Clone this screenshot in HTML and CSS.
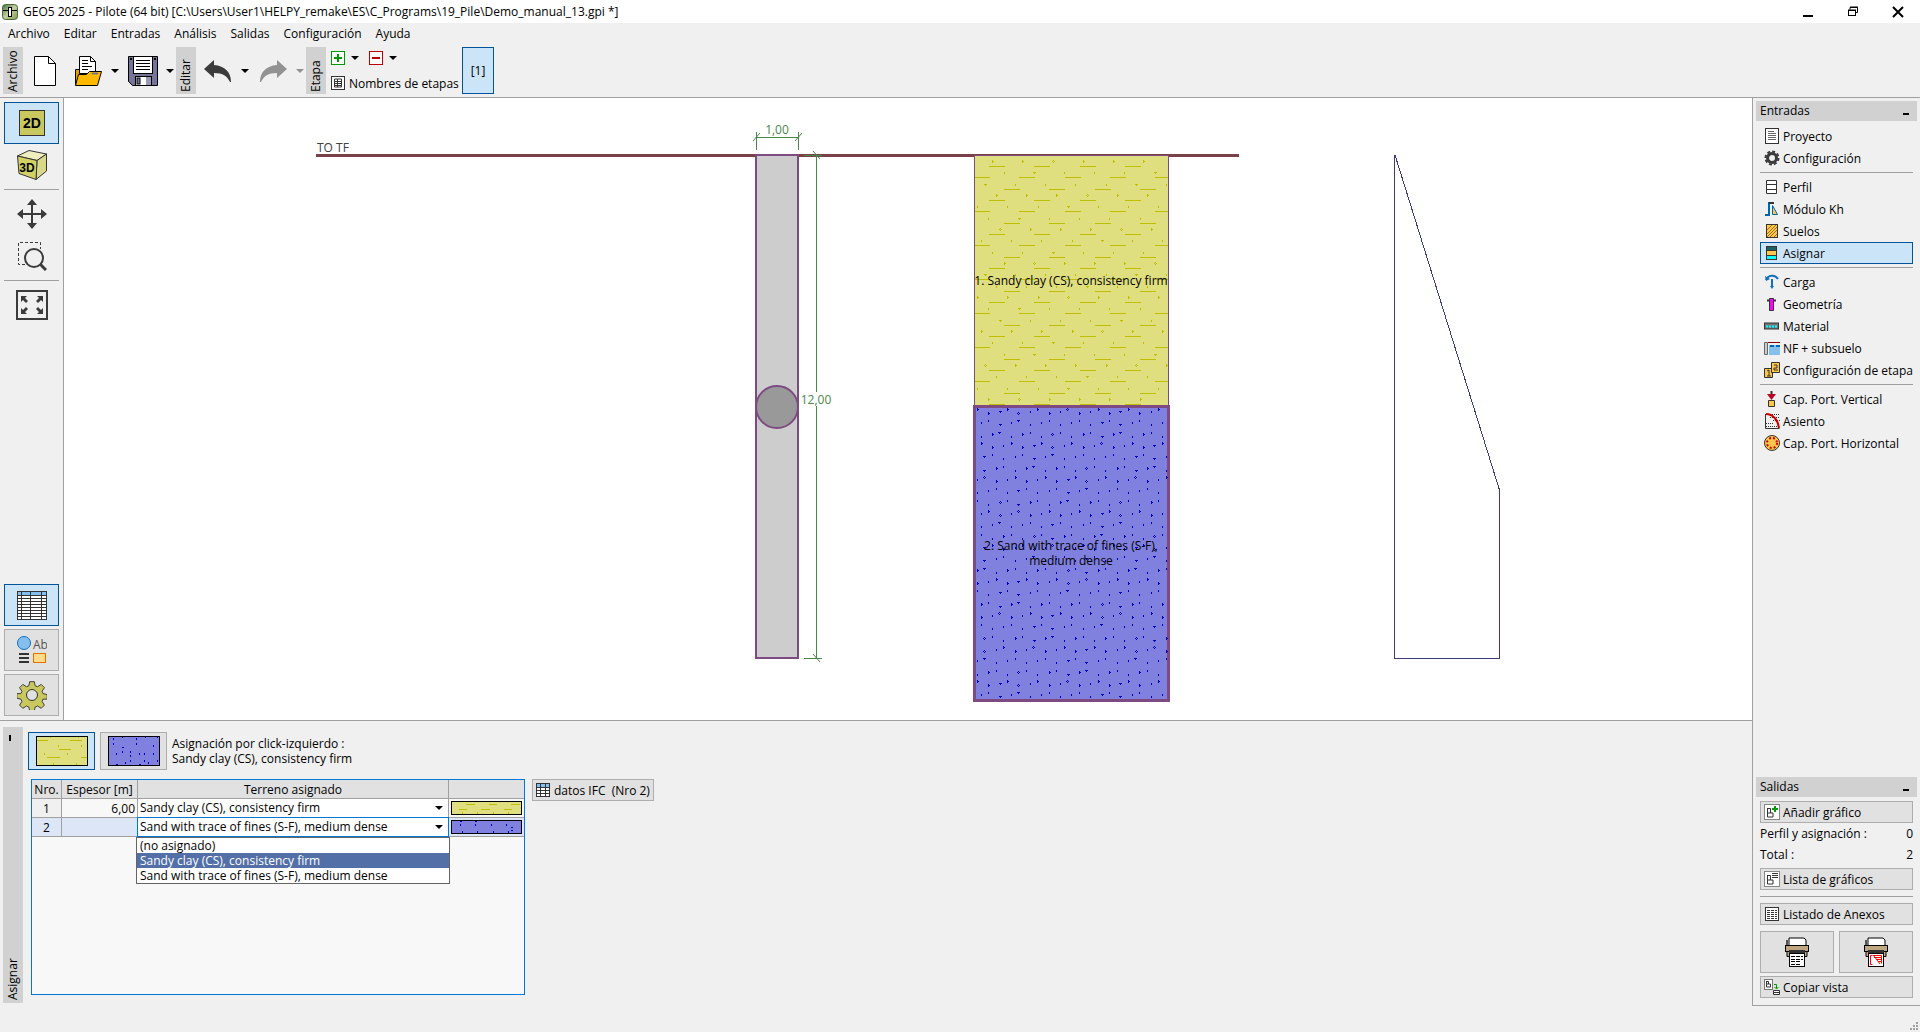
FILE: index.html
```html
<!DOCTYPE html>
<html lang="es">
<head>
<meta charset="utf-8">
<meta name="viewport" content="width=device-width, initial-scale=1">
<title>GEO5 2025 - Pilote</title>
<link rel="stylesheet" href="styles.css">
</head>
<body>
<header class="titlebar">
  <svg class="app-icon" width="16" height="16" viewBox="0 0 16 16"><defs><linearGradient id="app" x1="0" y1="0" x2="1" y2="1"><stop offset="0" stop-color="#3f7040"/><stop offset=".5" stop-color="#c3cf9c"/><stop offset="1" stop-color="#7f9a50"/></linearGradient></defs><rect x=".5" y=".5" width="15" height="15" rx="3" fill="url(#app)" stroke="#4c6a3e"/><path d="M1 6.500h5M10 6.500h5" stroke="#000"/><rect x="6.500" y="3.500" width="3" height="9" fill="#fff" stroke="#000"/></svg>
  <h1 class="title">GEO5 2025 - Pilote (64 bit) [C:\Users\User1\HELPY_remake\ES\C_Programs\19_Pile\Demo_manual_13.gpi *]</h1>
  <div class="window-buttons">
    <button class="win" aria-label="Minimizar"><svg width="12" height="12"><path d="M1 9h10v2H1z"/></svg></button>
    <button class="win" aria-label="Restaurar"><svg width="12" height="12" fill="none" stroke="#000"><path d="M3 3.500V1.500h7.500v5H9M3 1h8M1 4h8" /><rect x="1.500" y="4.500" width="7" height="5"/></svg></button>
    <button class="win" aria-label="Cerrar"><svg width="12" height="12"><path d="M1 1l10 10M11 1L1 11" stroke="#000" stroke-width="2"/></svg></button>
  </div>
</header>
<nav class="menubar">
  <button>Archivo</button><button>Editar</button><button>Entradas</button><button>Análisis</button><button>Salidas</button><button>Configuración</button><button>Ayuda</button>
</nav>
<div class="toolbar">
  <section class="tool-group">
    <span class="handle">Archivo</span>
    <button class="tool" aria-label="Nuevo"><svg width="30" height="32" viewBox="0 0 30 32"><path d="M4.500 1.500h14l7 7v22h-21z" fill="#fff" stroke="#000"/><path d="M18.500 1.500v7h7" fill="none" stroke="#000"/></svg></button>
    <button class="tool" aria-label="Abrir"><svg width="30" height="32" viewBox="0 0 30 32"><path d="M2.500 14.500h8v15H2.500z" fill="#e69b00" stroke="#000"/><path d="M6.500 1.500h11l5 5v12h-16z" fill="#fff" stroke="#000"/><path d="M17.500 1.500v5h5M9 5.500h6M9 8.500h6M9 11.500h10M9 14.500h6" fill="none" stroke="#000"/><path d="M5.500 19.500h8l3-3h12l-4 14h-22z" fill="#ffba00" stroke="#000"/><path d="M19 19h6v-1h-6z" fill="#777" stroke="#777"/></svg></button>
    <button class="drop" aria-label="Abrir reciente"><i class="caret"></i></button>
    <button class="tool" aria-label="Guardar"><svg width="30" height="32" viewBox="0 0 30 32"><path d="M.5 1.500h29v29H4.500l-4-4z" fill="#77749a" stroke="#000"/><rect x="5.500" y="1.500" width="19" height="17" fill="#fff" stroke="#000"/><path d="M8 5.500h14M8 8.500h14M8 11.500h14M8 14.500h14" stroke="#000"/><path d="M2 3h2v2H2zM26 3h2v2h-2z"/><rect x="7.500" y="21.500" width="16" height="9" fill="#fff" stroke="#000"/><rect x="9" y="23" width="3" height="6" fill="#77749a" stroke="#000"/><path d="M18 22h5v8h-5z" fill="#9a98b5"/></svg></button>
    <button class="drop" aria-label="Guardar como"><i class="caret"></i></button>
  </section>
  <section class="tool-group">
    <span class="handle">Editar</span>
    <button class="tool" aria-label="Deshacer"><svg width="30" height="32" viewBox="0 0 30 32"><path d="M1 14L11 5v5c11 1 17 7 17 17h-1c-3-6-7-9-16-9v5z" fill="#3b3b3b"/></svg></button>
    <button class="drop" aria-label="Historial"><i class="caret"></i></button>
    <button class="tool" aria-label="Rehacer" disabled><svg width="30" height="32" viewBox="0 0 30 32"><path d="M29 14L19 5v5C8 11 2 17 2 27h1c3-6 7-9 16-9v5z" fill="#929292"/></svg></button>
    <button class="drop" aria-label="Historial de rehacer" disabled><i class="caret caret-off"></i></button>
  </section>
  <section class="tool-group">
    <span class="handle">Etapa</span>
    <div class="stage">
      <div class="stage-row">
        <button aria-label="Añadir etapa"><svg width="14" height="14"><rect x=".5" y=".5" width="13" height="13" fill="#fff" stroke="#090"/><path d="M3 7h8M7 3v8" stroke="#090" stroke-width="2"/></svg></button>
        <button class="drop" aria-label="Opciones de añadir"><i class="caret"></i></button>
        <button class="minus" aria-label="Eliminar etapa"><svg width="14" height="14"><rect x=".5" y=".5" width="13" height="13" fill="#fff" stroke="#c00000"/><path d="M3 7h8" stroke="#c00000" stroke-width="2"/></svg></button>
        <button class="drop" aria-label="Opciones de eliminar"><i class="caret"></i></button>
      </div>
      <button class="stage-names"><svg width="14" height="14"><g fill="#fff" stroke="#333"><rect x=".5" y=".5" width="13" height="13"/><path d="M3.500 3h7v8h-7zM3 5.500h8M3 7.500h8M3 9.500h8M6.500 3v8"/></g></svg>Nombres de etapas</button>
    </div>
  </section>
  <button class="stage-tab selected">[1]</button>
</div>

<main class="main">
  <div class="left">
    <div class="work">
      <nav class="rail">
        <div class="rail-top">
          <button class="big selected" aria-label="Vista 2D"><svg width="30" height="30"><rect x="2.500" y="2.500" width="25" height="25" fill="#c8c85f" stroke="#333"/><text class="icon-bold" x="15" y="20" text-anchor="middle">2D</text></svg></button>
          <button class="big flat" aria-label="Vista 3D"><svg width="30" height="30" stroke="#333" stroke-linejoin="round"><path d="M.5 6L12 .5 29.500 4 20 10.500z" fill="#eeeec0"/><path d="M20 10.500L29.500 4v17L19 29.500z" fill="#d9d98a"/><path d="M.5 6L20 10.500l-1 19L2 23.500z" fill="#d2d264"/><text class="icon-bold small" x="10" y="22" text-anchor="middle" stroke="none">3D</text></svg></button>
          <hr>
          <button class="big flat" aria-label="Mover"><svg width="30" height="30"><path d="M15 0l5 6h-4v8h8v-4l6 5-6 5v-4h-8v8h4l-5 6-5-6h4v-8H6v4l-6-5 6-5v4h8V6h-4z" fill="#3b3b3b"/></svg></button>
          <button class="big flat" aria-label="Ampliar zona"><svg width="30" height="30" fill="none" stroke="#3b3b3b"><path d="M8 23.500H1.500v-22h22V8" stroke-dasharray="3 2"/><circle cx="17" cy="17" r="9" stroke-width="2"/><path d="M23 23l6 6" stroke-width="3"/></svg></button>
          <hr>
          <button class="big flat" aria-label="Ajustar a la ventana"><svg width="32" height="30"><rect x="1" y="1" width="30" height="28" fill="none" stroke="#3b3b3b" stroke-width="2"/><path d="M5 6h6l-2 2 3 3-2 2-3-3-2 2zM27 6h-6l2 2-3 3 2 2 3-3 2 2zM5 24h6l-2-2 3-3-2-2-3 3-2-2zM27 24h-6l2-2-3-3 2-2 3 3 2-2z" fill="#3b3b3b"/></svg></button>
        </div>
        <div class="rail-bottom">
          <button class="big selected" aria-label="Tabla"><svg width="30" height="30" shape-rendering="crispEdges"><rect x="0" y="1" width="30" height="28" fill="#fff"/><rect x="0" y="1" width="30" height="4" fill="#84bfee"/><path d="M0 1.500h30M0 5.500h30M0 8.500h30M0 11.500h30M0 14.500h30M0 17.500h30M0 20.500h30M0 23.500h30M0 26.500h30M0 29.500h30M.5 1v29M4.500 1v29M13.500 1v29M24.500 1v29M29.500 1v29" stroke="#333"/></svg></button>
          <button class="big" aria-label="Ajustes de dibujo"><svg width="30" height="30"><circle cx="7" cy="8" r="6.500" fill="#84bfee" stroke="#1070c0"/><text class="icon-ab" x="16" y="14">Ab</text><path d="M2 19h10M2 23h10M2 27h10" stroke="#333" stroke-width="2"/><rect x="16.500" y="18.500" width="12" height="9" fill="#ffdc8a" stroke="#e07000"/></svg></button>
          <button class="big" aria-label="Opciones"><svg width="30" height="30" viewBox="-15 -15 30 30"><path d="M-2.500 -14.500h5l1 4.500 2.500 1 4-2.500 3.500 3.500-2.500 4 1 2.500 4.500 1v5l-4.500 0-1 2.500 2.500 4-3.500 3.500-4-2.500-2.500 1-1 4.500h-5l-1-4.500-2.500-1-4 2.500-3.500-3.500 2.500-4-1-2.500-4.500-1v-5l4.500 0 1-2.500-2.500-4 3.500-3.500 4 2.500 2.500-1z" transform="scale(.92)" fill="#c8c85f" stroke="#333"/><circle r="5.500" fill="#e1e1e1" stroke="#333"/></svg></button>
        </div>
      </nav>
      <div class="canvas">
        <svg class="drawing" viewBox="0 0 1688 622" role="img" aria-label="Pilote y perfil del terreno">
          <g shape-rendering="crispEdges">
            <rect x="252" y="56" width="923" height="3" fill="#7a4248"/>
            <rect x="692" y="57" width="42" height="503" fill="#cdcdcd" stroke="#7d4b82" stroke-width="2"/>
            <rect x="910.500" y="57.500" width="194" height="251" fill="#dfdf80" stroke="#7d4b82"/>
            <g id="clay-hatch" fill="#bfbf00"></g>
            <rect x="910.500" y="308.500" width="194" height="294" fill="#8080df" stroke="#7d4b82" stroke-width="3"/>
            <g id="sand-hatch" fill="#0000bf"></g>
            <g fill="none" stroke="#4a854a">
              <path d="M692.500 34v18M734.500 34v18M692 39.500h42M752.500 57v237M752.500 308v252M740 57.500h18M740 560.500h18"/>
            </g>
            <path d="M1330.500 57v503.500h105V392L1331 57" fill="none" stroke="#3c3c78"/>
          </g>
          <circle cx="713" cy="309" r="21" fill="#999" stroke="#7d4b82" stroke-width="2"/>
          <path d="M689 43l7-8M731 43l7-8M749 53l7 8M749 556l7 8" stroke="#4a854a"/>
          <g class="draw-text">
            <text x="253" y="54" fill="#404040">TO TF</text>
            <text x="713" y="36" text-anchor="middle" fill="#4a854a">1,00</text>
            <text x="752" y="306" text-anchor="middle" fill="#4a854a">12,00</text>
            <text x="1007" y="187" text-anchor="middle">1. Sandy clay (CS), consistency firm</text>
            <text x="1007" y="452" text-anchor="middle">2. Sand with trace of fines (S-F),</text>
            <text x="1007" y="467" text-anchor="middle">medium dense</text>
          </g>
        </svg>
      </div>
    </div>

    <section class="frame">
      <div class="frame-handle"><i class="fold"></i><span>Asignar</span></div>
      <div class="frame-body">
        <div class="assign">
          <button class="soil-pick selected" aria-label="Sandy clay (CS), consistency firm"><svg width="52" height="30" shape-rendering="crispEdges"><rect x=".5" y=".5" width="51" height="29" fill="#dfdf80" stroke="#000"/><path d="M1 4h11v1H1zM34 4h12v1H34zM23 13h12v1H23zM11 21h13v1H11zM45 21h6v1h-6zM14 1h1v1h-1zM42 1h1v1h-1zM22 9h1v2h-1zM45 9h1v2h-1zM8 17h1v2H8zM31 17h1v2h-1zM17 27h1v2h-1zM40 27h1v2h-1z" fill="#bfbf00"/></svg></button>
          <button class="soil-pick" aria-label="Sand with trace of fines (S-F), medium dense"><svg width="52" height="30" shape-rendering="crispEdges"><rect x=".5" y=".5" width="51" height="29" fill="#8080df" stroke="#000"/><path d="M5 2h1v2H5zM5 7h1v2H5zM14 1h1v1h-1zM14 11h2v1h-2zM14 15h1v2h-1zM8 17h1v2H8zM8 28h2v1H8zM17 26h1v2h-1zM22 15h1v2h-1zM22 19h1v2h-1zM22 24h1v2h-1zM28 2h1v2h-1zM28 7h1v2h-1zM37 1h1v1h-1zM31 17h1v2h-1zM31 28h2v1h-2zM36 17h1v2h-1zM36 24h1v2h-1zM40 26h1v2h-1zM45 9h1v2h-1zM45 17h1v2h-1zM49 1h1v1h-1zM49 24h1v2h-1z" fill="#0000bf"/></svg></button>
          <p>Asignación por click-izquierdo :<br>Sandy clay (CS), consistency firm</p>
        </div>
        <div class="data">
          <div class="grid">
            <table>
              <colgroup><col class="c-num"><col class="c-thick"><col class="c-soil"><col></colgroup>
              <thead><tr><th>Nro.</th><th>Espesor [m]</th><th>Terreno asignado</th><th></th></tr></thead>
              <tbody>
                <tr><td class="num">1</td><td class="thick">6,00</td>
                  <td class="soil"><div class="combo"><select aria-label="Terreno asignado 1"><option>Sandy clay (CS), consistency firm</option><option>Sand with trace of fines (S-F), medium dense</option></select><i class="caret"></i></div></td>
                  <td class="swatch"><svg width="71" height="14" shape-rendering="crispEdges"><rect x=".5" y=".5" width="70" height="13" fill="#dfdf80" stroke="#000"/><path d="M15 3h9v1h-9zM38 3h8v1h-8zM60 3h9v1h-9zM8 8h8v1H8zM30 8h9v1h-9zM53 8h8v1h-8zM11 11h1v2h-1zM26 11h1v2h-1zM42 11h1v2h-1zM57 11h1v2h-1z" fill="#bfbf00"/></svg></td></tr>
                <tr class="current"><td class="num">2</td><td class="thick"></td>
                  <td class="soil"><div class="combo"><select aria-label="Terreno asignado 2"><option>Sand with trace of fines (S-F), medium dense</option><option>Sandy clay (CS), consistency firm</option></select><i class="caret"></i>
                    <ul class="options" role="listbox"><li role="option">(no asignado)</li><li role="option" class="on" aria-selected="true">Sandy clay (CS), consistency firm</li><li role="option">Sand with trace of fines (S-F), medium dense</li></ul></div></td>
                  <td class="swatch"><svg width="71" height="14" shape-rendering="crispEdges"><rect x=".5" y=".5" width="70" height="13" fill="#8080df" stroke="#000"/><path d="M9 1h2v1H9zM24 1h2v1h-2zM9 4h1v2H9zM24 4h1v2h-1zM40 4h1v2h-1zM55 4h1v2h-1zM11 11h1v2h-1zM26 11h1v2h-1zM42 11h1v2h-1zM57 11h1v2h-1zM60 7h2v1h-2zM60 10h2v1h-2z" fill="#0000bf"/></svg></td></tr>
              </tbody>
            </table>
          </div>
          <button class="btn ifc"><svg width="14" height="14" shape-rendering="crispEdges"><path d="M0 0h14v14H0z" fill="#fff"/><path d="M0 0h14v4H0z" fill="#84bfee"/><path d="M0 .5h14M0 4.500h14M0 7.500h14M0 10.500h14M0 13.500h14M.5 0v14M4.500 0v14M9.500 0v14M13.500 0v14" stroke="#333"/></svg><span>datos IFC&nbsp; (Nro 2)</span></button>
        </div>
      </div>
    </section>
  </div>

  <aside class="side">
    <section>
      <h2 class="side-head">Entradas<i class="fold-h"></i></h2>
      <nav class="entries">
        <button><svg width="16" height="16"><rect x="1.500" y=".5" width="13" height="15" fill="#fff" stroke="#333"/><path d="M4 3.500h6M4 5.500h8M4 7.500h8M4 9.500h8M4 11.500h8" stroke="#666"/></svg>Proyecto</button>
        <button><svg width="16" height="16" fill="none" stroke="#3b3b3b"><circle cx="8" cy="8" r="4.500" stroke-width="3"/><circle cx="8" cy="8" r="6.500" stroke-width="2" stroke-dasharray="3 2"/></svg>Configuración</button>
        <hr>
        <button><svg width="16" height="16"><path d="M2.500 1.500h10v13h-10zM2 5.500h11M2 10.500h11" fill="#fff" stroke="#333"/></svg>Perfil</button>
        <button><svg width="16" height="16"><path d="M1 14h4V2h5" fill="none" stroke="#0064b4" stroke-width="2"/><path d="M5 2h5" stroke="#333" stroke-width="2"/><path d="M8.500 4.500v9h5z" fill="#ffc84a" stroke="#0064b4"/></svg>Módulo Kh</button>
        <button><svg width="16" height="16"><rect x="2.500" y="1.500" width="11" height="13" fill="#ffc84a" stroke="#333"/><path d="M3 7l5-5M3 11l9-9M3 14L13 4M6 14l7-7M10 14l3-3" stroke="#a06a10"/></svg>Suelos</button>
        <button class="selected"><svg width="16" height="16"><rect x="2.500" y="1.500" width="10" height="13" fill="#ffc84a" stroke="#333"/><path d="M3 2h9v3H3z" fill="#1f5f5f"/><path d="M3 11h9v3H3z" fill="#0ff"/><path d="M2 5.500h11M2 10.500h11" stroke="#333"/></svg>Asignar</button>
        <hr>
        <button><svg width="16" height="16" fill="none" stroke="#1070c0" stroke-width="2"><path d="M2 6c2-5 9-6 12-1M8 5v8"/><path d="M1 2l1 5 4-2zM6 12h4l-2 3z" stroke="none" fill="#1070c0"/></svg>Carga</button>
        <button><svg width="16" height="16"><path d="M3 4.500h9" stroke="#333" stroke-width="2"/><path d="M5.500 2.500h4v12h-4z" fill="#f0f" stroke="#333"/></svg>Geometría</button>
        <button><svg width="16" height="16"><rect x=".5" y="5" width="14" height="6" fill="#777" stroke="#333"/><path d="M2 8.500h11" stroke="#0ff" stroke-width="2" stroke-dasharray="2 1"/></svg>Material</button>
        <button><svg width="16" height="16"><path d="M5 5h11v10H5z" fill="#84bfee"/><path d="M.5 2.500h3v12h-3z" fill="#ccc" stroke="#666"/><path d="M4 2.500h12" stroke="#800000"/><path d="M6 6h4M12 6h4" stroke="#0064b4" stroke-width="2"/></svg>NF + subsuelo</button>
        <button><svg width="16" height="16"><path d="M.5 6.500h8v9h-8z" fill="#ffc84a" stroke="#333"/><path d="M7.500.5h8v10h-8z" fill="#ffc84a" stroke="#333"/><path d="M3 9l2-1v6M3 14h4M10 3h3v3h-3v2h4" fill="none" stroke="#333"/></svg>Configuración de etapa</button>
        <hr>
        <button><svg width="16" height="16"><path d="M4.500 9.500h6v6h-6z" fill="#ffc84a" stroke="#333"/><path d="M7.500 0v6" stroke="#333" stroke-width="2"/><path d="M3 3h9L7.500 9z" fill="#c00020"/></svg>Cap. Port. Vertical</button>
        <button><svg width="16" height="16"><path d="M4 1.500h12M6 4.500h10M9 7.500h7M2 10.500h8M2 13.500h14" stroke="#333" stroke-dasharray="1 1"/><path d="M1.500 1v14.500h14" fill="none" stroke="#333"/><path d="M2 1c7 0 12 6 13 14" fill="none" stroke="#c00" stroke-width="2"/></svg>Asiento</button>
        <button><svg width="16" height="16"><circle cx="8" cy="8" r="7.500" fill="#ffc84a" stroke="#333"/><circle cx="8" cy="8" r="5" fill="none" stroke="#c00" stroke-width="2" stroke-dasharray="2 2"/></svg>Cap. Port. Horizontal</button>
      </nav>
    </section>
    <section>
      <h2 class="side-head">Salidas<i class="fold-h"></i></h2>
      <div class="outputs">
        <button class="btn"><svg width="16" height="16"><rect x=".5" y=".5" width="15" height="15" fill="#fff" stroke="#888"/><path d="M3.500 4v9h5.500v-4H4M3.500 4.500h3V9" fill="none" stroke="#333"/><path d="M8 5h6M11 2v6" stroke="#090" stroke-width="2"/></svg>Añadir gráfico</button>
        <p class="count"><span>Perfil y asignación :</span><span>0</span></p>
        <p class="count"><span>Total :</span><span>2</span></p>
        <button class="btn"><svg width="16" height="16"><rect x=".5" y=".5" width="15" height="15" fill="#fff" stroke="#888"/><path d="M3.500 4v9h5.500v-4H4M3.500 4.500h3V9M8 2.500h6M8 4.500h6M8 6.500h6" fill="none" stroke="#333"/></svg>Lista de gráficos</button>
        <hr>
        <button class="btn"><svg width="16" height="16"><rect x="1.500" y="1.500" width="13" height="13" fill="#fff" stroke="#333"/><path d="M3 4.500h10M3 6.500h10M3 8.500h10M3 10.500h10M3 12.500h10" stroke="#333" stroke-dasharray="3 1"/></svg>Listado de Anexos</button>
        <div class="printers">
          <button class="btn" aria-label="Imprimir documento"><svg width="26" height="30"><g id="printer"><path d="M5 8V1h15l2 2v5" fill="#fff" stroke="#000"/><path d="M2 3h2v5H2z" fill="#555"/><rect x="1.500" y="8.500" width="23" height="6" fill="#bfa880" stroke="#000"/><path d="M3 14.500h20v5H3z" fill="#bfa880" stroke="#000"/><path d="M5 13h16v4H5z" fill="#333"/></g><rect x="5.500" y="16.500" width="15" height="13" fill="#fff" stroke="#000"/><path d="M7 19.500h12M7 22.500h12M7 24.500h9M7 27.500h10" stroke="#000" stroke-dasharray="4 1"/></svg></button>
          <button class="btn" aria-label="Imprimir vista"><svg width="26" height="30"><use href="#printer"/><rect x="5.500" y="16.500" width="15" height="13" fill="#fff" stroke="#000"/><path d="M9.500 18.500h-2v9h2M10 18.500h8.500v8M11 20.500h7M13 22.500h5M15 24.500h3M11 19l6 8" fill="none" stroke="#f00"/></svg></button>
        </div>
        <button class="btn"><svg width="16" height="16"><rect x=".5" y=".5" width="8" height="10" fill="#fff" stroke="#777"/><path d="M2.500 2v6h4V5h-4M2.500 2.500h2V5" fill="none" stroke="#333"/><path d="M10 5.500h2.500v4M10.500 8l2 2 2-2" fill="none" stroke="#090"/><path d="M9.500 11.500h6v4h-6zM9 13.500h7" fill="#fff" stroke="#333"/></svg>Copiar vista</button>
      </div>
    </section>
  </aside>
</main>
<footer class="status"><svg width="9" height="9" fill="#a0a0a0"><path d="M6 0h2v2H6zM3 3h2v2H3zM6 3h2v2H6zM0 6h2v2H0zM3 6h2v2H3zM6 6h2v2H6z"/></svg></footer>
<script src="script.js"></script>
</body>
</html>
```

FILE: styles.css
```css
:root {
  --line: #a0a0a0;
  --face: #f0f0f0;
  --head: #d1d1d1;
  --button: #e1e1e1;
  --edge: #adadad;
  --pick: #cce4f7;
  --pick-edge: #005499;
}

* { box-sizing: border-box; }

body {
  margin: 0;
  min-height: 100vh;
  display: flex;
  flex-direction: column;
  background: var(--face);
  color: #000;
  font: 12px/15px "Open Sans", "Noto Sans", sans-serif;
}

button, select {
  font: inherit;
  color: inherit;
  padding: 0;
  border: 0;
  background: none;
}

svg { display: block; flex: none; }
h1, h2, p, ul { margin: 0; padding: 0; font: inherit; }

hr {
  width: 100%;
  margin: 3px 0;
  border: 0;
  border-top: 1px solid var(--line);
}

.selected { background: var(--pick); border: 1px solid var(--pick-edge); }

/* title and menus */
.titlebar {
  display: flex;
  align-items: center;
  height: 23px;
  padding-left: 2px;
  background: #fff;
}
.title { flex: 1; margin-left: 5px; white-space: nowrap; }
.window-buttons { display: flex; }
.win { width: 45px; height: 23px; display: grid; place-items: center; }
.menubar { display: flex; height: 21px; padding-left: 1px; }
.menubar button { padding: 0 7px; }

/* toolbar */
.toolbar {
  display: flex;
  height: 54px;
  padding: 3px;
  border-bottom: 1px solid var(--line);
}
.tool-group { display: flex; align-items: center; height: 47px; }
.handle {
  width: 20px;
  height: 47px;
  padding: 2px 0;
  background: var(--head);
  writing-mode: vertical-rl;
  transform: rotate(180deg);
  line-height: 20px;
}
.tool { display: grid; place-items: center; width: 43px; height: 47px; }
.tool + .drop { margin-left: -1px; }
.drop { width: 13px; height: 14px; display: grid; place-items: center; }
.caret {
  width: 0;
  height: 0;
  border: 4px solid transparent;
  border-top-color: #000;
  border-bottom: 0;
}
.caret-off { border-top-color: #929292; }
.stage { display: flex; flex-direction: column; gap: 11px; width: 126px; margin-left: 5px; }
.stage-row { display: flex; gap: 3px; }
.minus { margin-left: 5px; }
.stage-names { display: flex; align-items: center; gap: 4px; height: 14px; white-space: nowrap; }
.stage-tab { width: 32px; height: 47px; margin-left: 5px; }

/* work area */
.main { flex: 1; display: flex; }
.left { flex: 1; min-width: 0; display: flex; flex-direction: column; }
.work { flex: 1; display: flex; border-bottom: 1px solid var(--line); }
.rail {
  width: 64px;
  padding: 4px;
  border-right: 1px solid var(--line);
  display: flex;
  flex-direction: column;
  justify-content: space-between;
}
.rail-bottom { display: grid; gap: 3px; }
.big {
  width: 55px;
  height: 42px;
  display: grid;
  place-items: center;
  background: var(--button);
  border: 1px solid var(--edge);
}
.big.flat { background: none; border-color: transparent; }
.big.selected { background: var(--pick); border-color: var(--pick-edge); }
.rail hr { width: 55px; }
.icon-bold { font: bold 14px "Liberation Sans", sans-serif; }
.icon-bold.small { font-size: 12px; }
.icon-ab { font-size: 12px; fill: #555; }
.canvas { flex: 1; min-width: 0; background: #fff; display: flex; }
.drawing { flex: 1; min-width: 0; width: 100%; height: auto; }
.draw-text { font-size: 12px; }

/* lower frame */
.frame { display: flex; gap: 5px; padding: 6px 3px 3px; }
.frame-handle {
  width: 20px;
  min-height: 276px;
  padding: 3px 0;
  background: var(--head);
  writing-mode: vertical-rl;
  transform: rotate(180deg);
  line-height: 20px;
  display: flex;
  justify-content: space-between;
  flex-direction: row-reverse;
}
.fold { width: 2px; height: 6px; margin: 5px 6px; background: #000; }
.frame-body { flex: 1; padding-top: 5px; }
.assign { display: flex; gap: 5px; align-items: center; }
.soil-pick {
  width: 67px;
  height: 38px;
  display: grid;
  place-items: center;
  background: var(--button);
  border: 1px solid var(--edge);
}
.soil-pick.selected { background: var(--pick); border-color: var(--pick-edge); }
.data { display: flex; align-items: flex-start; gap: 7px; margin: 9px 0 0 3px; }
.grid {
  width: 494px;
  height: 216px;
  border: 1px solid #0078d7;
  background: #f8f8f8;
}
table { width: 492px; table-layout: fixed; border-collapse: separate; border-spacing: 0; }
.c-num { width: 30px; }
.c-thick { width: 76px; }
.c-soil { width: 311px; }
th, td {
  height: 19px;
  padding: 0;
  font-weight: normal;
  line-height: 18px;
  white-space: nowrap;
  border-right: 1px solid var(--line);
  border-bottom: 1px solid var(--line);
}
th { background: var(--button); }
th, .num, .thick { padding-top: 2px; line-height: 16px; }
th:last-child, td:last-child { border-right: 0; }
.num { text-align: center; background: #f0f0f0; }
.thick { text-align: right; padding-right: 2px; background: #f8f8f8; }
.soil { background: #fff; }
.current .num, .current .thick, .current .swatch { background: #dce6f7; }
.current .soil { box-shadow: 0 -1px #0078d7, -1px 0 #0078d7, -1px -1px #0078d7; border-color: #0078d7; }
.combo { position: relative; display: flex; align-items: center; height: 18px; }
select {
  appearance: none;
  width: 100%;
  height: 18px;
  padding: 0 20px 0 2px;
}
.combo .caret { position: absolute; right: 5px; top: 7px; }
.swatch svg { margin: 0 2px; }
.options {
  position: absolute;
  top: 19px;
  left: -2px;
  width: 314px;
  border: 1px solid #646464;
  background: #fff;
  list-style: none;
  z-index: 1;
}
.options li { height: 15px; line-height: 15px; padding-left: 3px; }
.options .on { background: #536fa7; color: #fff; }

.btn {
  display: flex;
  align-items: center;
  gap: 4px;
  height: 22px;
  padding: 0 3px;
  background: var(--button);
  border: 1px solid var(--edge);
}
.ifc { white-space: nowrap; }

/* side panels */
.side {
  width: 168px;
  padding: 3px 3px 7px;
  border-left: 1px solid var(--line);
  border-bottom: 1px solid var(--line);
  display: flex;
  flex-direction: column;
  justify-content: space-between;
}
.side-head {
  display: flex;
  justify-content: space-between;
  height: 20px;
  line-height: 20px;
  padding: 0 8px 0 4px;
  background: var(--head);
}
.fold-h { width: 6px; height: 2px; margin-top: 12px; background: #000; }
.entries, .outputs { display: flex; flex-direction: column; padding: 4px 4px 0; }
.entries button {
  display: flex;
  align-items: center;
  gap: 3px;
  height: 22px;
  padding-left: 3px;
  border: 1px solid transparent;
  white-space: nowrap;
}
.entries .selected { border-color: var(--pick-edge); }
.outputs .btn { gap: 3px; }
.count { display: flex; justify-content: space-between; height: 21px; line-height: 22px; }
.count + .btn { margin-top: 3px; }
.outputs hr { margin: 6px 0; }
.printers { display: flex; gap: 5px; margin: 6px 0 3px; }
.printers .btn { flex: 1; height: 42px; justify-content: center; }

.status { height: 26px; display: flex; justify-content: flex-end; align-items: flex-end; padding: 0 1px 1px 0; }
```

FILE: script.js
```js
// Soil hatches: every mark is snapped to whole units so that it stays sharp.
const STEP = 34 / 3;
const PITCH = 272 / 9;

function rect(group, x, y, w, h) {
  const el = document.createElementNS("http://www.w3.org/2000/svg", "rect");
  el.setAttribute("x", x);
  el.setAttribute("y", y);
  el.setAttribute("width", w);
  el.setAttribute("height", h);
  group.appendChild(el);
}

function grain(group, x, y, tall) {
  const slot = ((Math.round((x - 913.3) / (34 / 9)) % 9) + 9) % 9;
  const wide = slot === 2 || slot === 6;
  const px = Math.floor(x);
  const py = Math.round(y);
  if (wide && tall) {
    rect(group, px, py - 1, 1, 1);
    rect(group, px - 1, py, 1, 1);
    rect(group, px + 1, py, 1, 1);
    rect(group, px, py + 1, 1, 1);
  } else if (wide) {
    rect(group, px - 1, py, 3, 1);
    rect(group, px, py + 1, 1, 1);
  } else if (tall) {
    rect(group, px, py - 1, 1, 3);
    rect(group, px + 1, py, 1, 1);
  } else {
    rect(group, px, py, 1, 2);
  }
}

function grains(group, x0, y0, tallRow, box) {
  for (let r = 0; y0 + r * STEP < box.bottom; r++) {
    for (let k = -12; k < 9; k++) {
      const x = x0 + r * STEP + k * PITCH;
      if (x > box.left && x < box.right) {
        grain(group, x, y0 + r * STEP, r % 3 === tallRow);
      }
    }
  }
}

const clay = document.getElementById("clay-hatch");
grains(clay, 928.7, 63, 0, { left: 912, right: 1103, bottom: 305 });
[[925, 68], [910, 79], [940, 91]].forEach(([x0, y0]) => {
  for (let y = y0; y < 308; y += 34) {
    for (let k = -1; k < 5; k++) {
      const x = Math.round(x0 + k * 136 / 3);
      const from = Math.max(x, 911);
      const to = Math.min(x + 16, 1104);
      if (to > from) rect(clay, from, y, to - from, 1);
    }
  }
});

const sand = document.getElementById("sand-hatch");
const box = { left: 912, right: 1103, bottom: 600 };
grains(sand, 913.3, 311, 0, box);
grains(sand, 936, 313, 2, box);
grains(sand, 924.7, 315, 0, box);
```
